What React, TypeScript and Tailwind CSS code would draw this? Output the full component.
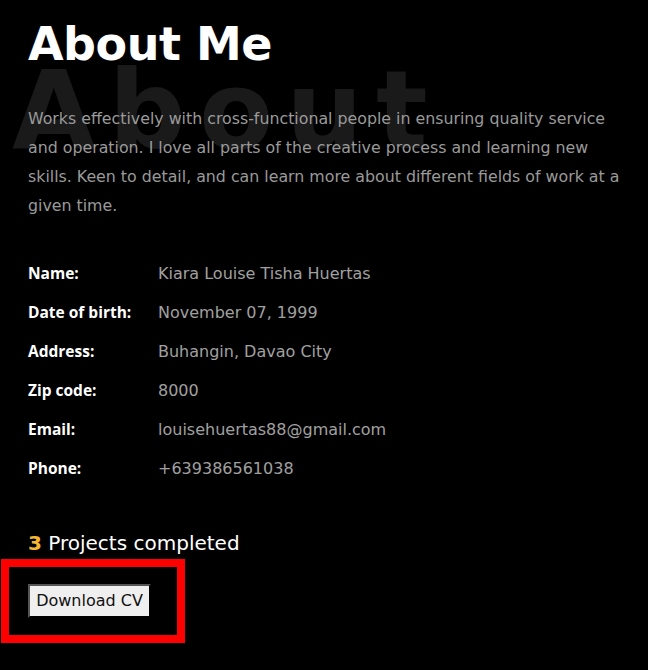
import React from "react";

const rows: [string, string][] = [
  ["Name:", "Kiara Louise Tisha Huertas"],
  ["Date of birth:", "November 07, 1999"],
  ["Address:", "Buhangin, Davao City"],
  ["Zip code:", "8000"],
  ["Email:", "louisehuertas88@gmail.com"],
  ["Phone:", "+639386561038"],
];

export default function App() {
  return (
    <div
      className="min-h-[670px] w-[648px] bg-black overflow-hidden"
      style={{ fontFamily: '"DejaVu Sans", "Open Sans", sans-serif' }}
    >
      <div className="relative px-[28px] pt-[14px]">
        <div className="absolute left-[12px] top-[57px] text-[108px] font-bold leading-none text-[#1a1a1a] tracking-[13px] select-none">
          About
        </div>
        <h1 className="relative text-[46px] font-bold leading-[60px] text-white tracking-[-0.5px]">
          About Me
        </h1>
        <p className="relative mt-[30px] text-[15.8px] leading-[29px] text-[#9a9a9a] w-[604px]">
          Works effectively with cross-functional people in ensuring quality service and operation. I love all parts of the creative process and learning new skills. Keen to detail, and can learn more about different fields of work at a given time.
        </p>
      </div>
      <div className="mt-[34px] px-[28px] flex flex-col">
        {rows.map(([k, v]) => (
          <div key={k} className="flex h-[39px] items-center">
            <div
              className="w-[130px] text-[15.5px] font-bold text-white"
              style={{ fontFamily: '"Open Sans", sans-serif' }}
            >
              {k}
            </div>
            <div className="text-[16px] text-[#a0a0a0]">{v}</div>
          </div>
        ))}
      </div>
      <div className="mt-[40px] px-[28px] text-[20px] leading-[30px] text-white">
        <span className="font-bold text-[#f5b731]">3</span> Projects completed
      </div>
      <div className="mt-[1px] ml-[1px] w-[184px] h-[84px] border-[8px] border-[#ff0000] flex items-center pl-[19px]">
        <button className="h-[34px] w-[123px] bg-[#efefef] border-t-2 border-l-2 border-r-2 border-b-2 border-t-[#555] border-l-[#555] border-r-black border-b-black text-[16px] text-[#111]">
          Download CV
        </button>
      </div>
    </div>
  );
}
